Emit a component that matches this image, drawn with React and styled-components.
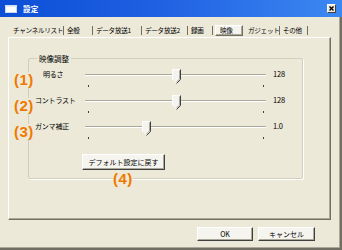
import React from 'react';
import styled, { createGlobalStyle } from 'styled-components';

const GlobalStyle = createGlobalStyle`
  html, body {
    margin: 0;
    padding: 0;
    background: #ece9d8;
    overflow: hidden;
  }
  body {
    font-family: "Noto Sans CJK JP", "DejaVu Sans", sans-serif;
  }
`;

const Window = styled.div`
  width: 342px;
  height: 250px;
  box-sizing: border-box;
  display: flex;
  flex-direction: column;
  background: #ece9d8;
  border-right: 2px solid #716f64;
  border-bottom: 2px solid #716f64;
  box-shadow: inset -1px -1px 0 #aca899;
`;

const TitleBar = styled.div`
  height: 17px;
  flex: none;
  display: flex;
  align-items: center;
  padding: 0 5px 0 5px;
  margin-right: -2px;
  background: linear-gradient(to right, #0c4fd6 0%, #1f5fe2 45%, #3b88f2 100%);
  color: #fff;
`;

const TitleText = styled.span`
  margin-left: 6px;
  font-size: 7.5px;
  font-weight: 700;
  letter-spacing: 0.3px;
  flex: 1;
`;

const CloseBox = styled.div`
  width: 9px;
  height: 9px;
  margin-right: 1px;
  background: #ece9d8;
  border: 1px solid;
  border-color: #fff #404040 #404040 #fff;
  box-sizing: border-box;
  display: flex;
  align-items: center;
  justify-content: center;
`;

const Body = styled.div`
  flex: 1;
  display: flex;
  flex-direction: column;
  padding: 7px 9px 0 8px;
`;

const TabRow = styled.div`
  display: flex;
  align-items: center;
  height: 13px;
  padding-left: 2px;
`;

const Tab = styled.div`
  width: ${p => p.w}px;
  height: ${p => (p.active ? 11 : 9)}px;
  box-sizing: border-box;
  font-size: 6.6px;
  letter-spacing: -0.3px;
  line-height: 9px;
  color: #000;
  white-space: nowrap;
  overflow: hidden;
  padding-left: ${p => (p.active ? 4 : 3)}px;
  border-right: 1px solid #716f64;
  ${p => p.active && `
    border: 1px solid;
    border-color: #fff #716f64 #716f64 #fff;
    box-shadow: inset -1px -1px 0 #aca899;
    background: #f4f3ee;
    line-height: 9px;
    margin: 0 2px 0 2px;
  `}
`;

const Panel = styled.div`
  height: 183px;
  box-sizing: border-box;
  border: 1px solid;
  border-color: #fff #716f64 #716f64 #fff;
  box-shadow: inset -1px -1px 0 #aca899;
  padding: 15px 27px 0 19px;
  position: relative;
`;

const Group = styled.fieldset`
  margin: 0;
  height: 126px;
  box-sizing: border-box;
  border: 1px solid #d0d0bf;
  border-radius: 2px;
  box-shadow: 1px 1px 0 #fff;
  padding: 5px 0 0 6px;
`;

const Legend = styled.legend`
  font-size: 7.5px;
  padding: 0 2px;
  margin-left: 2px;
  color: #000;
`;

const Row = styled.div`
  display: flex;
  align-items: flex-start;
  height: 26px;
`;

const RowLabel = styled.div`
  width: 50px;
  padding-left: ${p => p.indent || 0}px;
  box-sizing: border-box;
  font-size: 7px;
  letter-spacing: -0.2px;
  line-height: 13px;
  margin-top: -1px;
  white-space: nowrap;
`;

const Track = styled.div`
  position: relative;
  width: 181px;
  height: 22px;
`;

const Groove = styled.div`
  position: absolute;
  left: 0;
  right: 0;
  top: 5px;
  height: 1px;
  background: #aca899;
  border-bottom: 1px solid #fff;
`;

const Tick = styled.div`
  position: absolute;
  top: 16px;
  width: 1px;
  height: 2px;
  background: #404040;
`;

const Thumb = styled.svg`
  position: absolute;
  top: 0;
  margin-left: -4px;
`;

const Value = styled.div`
  margin-left: 7px;
  font-size: 7.5px;
  line-height: 12px;
  margin-top: -1px;
  letter-spacing: -0.2px;
`;

const ButtonRow = styled.div`
  padding-left: 47px;
  margin-top: -1px;
`;

const Button = styled.button`
  width: ${p => p.w}px;
  height: ${p => p.h || 15}px;
  padding: 0;
  font-family: "Noto Sans CJK JP", "DejaVu Sans", sans-serif;
  font-size: 7px;
  color: #000;
  background: #f5f4ee;
  border: 1px solid;
  border-color: #fff #404040 #404040 #fff;
  box-shadow: inset -1px -1px 0 #aca899;
  white-space: nowrap;
`;

const Footer = styled.div`
  display: flex;
  justify-content: flex-end;
  gap: 5px;
  padding: 7px 16px 0 0;
`;

const Note = styled.div`
  position: absolute;
  left: ${p => p.x}px;
  top: ${p => p.y}px;
  font-family: "Liberation Sans", Arial, sans-serif;
  font-weight: 700;
  font-size: 15px;
  line-height: 15px;
  letter-spacing: 0.4px;
  color: #f07800;
  background: #ece9d8;
`;

const tabs = [
  { label: 'チャンネルリスト', w: 54 },
  { label: '全般', w: 29 },
  { label: 'データ放送1', w: 49 },
  { label: 'データ放送2', w: 46 },
  { label: '録画', w: 25 },
  { label: '映像', w: 28, active: true },
  { label: 'ガジェット', w: 35 },
  { label: 'その他', w: 28 },
];

const sliders = [
  { label: '明るさ', indent: 8, pos: 0.5, value: '128' },
  { label: 'コントラスト', pos: 0.5, value: '128' },
  { label: 'ガンマ補正', pos: 0.333, value: '1.0' },
];

const Trackbar = ({ pos }) => (
  <Track>
    <Groove />
    <Tick style={{ left: 3 }} />
    <Tick style={{ left: 178 }} />
    <Thumb width="9" height="15" viewBox="0 0 9 15" style={{ left: 3 + pos * 175 }}>
      <path d="M0.5 0.5 H8.5 V10.5 L4.5 14.5 L0.5 10.5 Z" fill="#f4f3ee" />
      <path d="M0.5 10.5 V0.5 H8" stroke="#fff" strokeWidth="1" fill="none" />
      <path d="M8.5 0.5 V10.5 L4.5 14.5" stroke="#404040" strokeWidth="1" fill="none" />
      <path d="M7.5 1.5 V10 L4.5 13" stroke="#aca899" strokeWidth="1" fill="none" />
    </Thumb>
  </Track>
);

export default function App() {
  return (
    <>
      <GlobalStyle />
      <Window>
        <TitleBar>
          <svg width="12" height="8" viewBox="0 0 12 8">
            <rect x="0.5" y="0.5" width="11" height="7" fill="#fff" stroke="#c8d8f0" />
            <rect x="0.5" y="0.5" width="11" height="1.5" fill="#dfe8f8" />
          </svg>
          <TitleText>設定</TitleText>
          <CloseBox>
            <svg width="5" height="5" viewBox="0 0 5 5">
              <path d="M0.5 0.5 L4.5 4.5 M4.5 0.5 L0.5 4.5" stroke="#000" strokeWidth="1.4" />
            </svg>
          </CloseBox>
        </TitleBar>
        <Body>
          <TabRow>
            {tabs.map(t => (
              <Tab key={t.label} w={t.w} active={t.active}>{t.label}</Tab>
            ))}
          </TabRow>
          <Panel>
            <Group>
              <Legend>映像調整</Legend>
              {sliders.map(s => (
                <Row key={s.label}>
                  <RowLabel indent={s.indent}>{s.label}</RowLabel>
                  <Trackbar pos={s.pos} />
                  <Value>{s.value}</Value>
                </Row>
              ))}
              <ButtonRow>
                <Button w={83} h={16}>デフォルト設定に戻す</Button>
              </ButtonRow>
            </Group>
            <Note x={5} y={34}>(1)</Note>
            <Note x={5} y={60}>(2)</Note>
            <Note x={5} y={86}>(3)</Note>
            <Note x={104} y={133}>(4)</Note>
          </Panel>
          <Footer>
            <Button w={56} h={14}>OK</Button>
            <Button w={57} h={14}>キャンセル</Button>
          </Footer>
        </Body>
      </Window>
    </>
  );
}
